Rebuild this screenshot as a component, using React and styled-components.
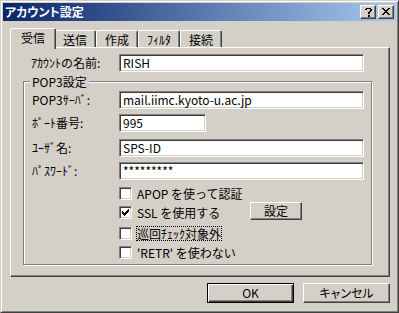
import React from 'react';
import styled, { createGlobalStyle } from 'styled-components';

const FACE = '#D4D0C8';

const GlobalStyle = createGlobalStyle`
  html, body { margin: 0; padding: 0; background: ${FACE}; }
  body {
    font-family: "Noto Sans CJK JP", "Liberation Sans", sans-serif;
    font-size: 12px;
    color: #000;
  }
  *, *::before, *::after { box-sizing: border-box; }
  #root { width: 399px; height: 313px; }
`;

const Window = styled.div`
  width: 399px;
  height: 313px;
  display: flex;
  flex-direction: column;
  padding: 2px;
  background: ${FACE};
  border: 1px solid;
  border-color: ${FACE} #404040 #404040 ${FACE};
  box-shadow: inset 1px 1px 0 #fff, inset -1px -1px 0 #808080;
`;

const TitleBar = styled.div`
  flex: none;
  height: 18px;
  display: flex;
  align-items: center;
  padding: 0 2px 0 2px;
  background: linear-gradient(to right, #0a246a, #a6caf0);
`;

const TitleText = styled.span`
  color: #fff;
  font-weight: bold;
  font-size: 12px;
  line-height: 18px;
  font-feature-settings: "palt";
  white-space: nowrap;
`;

const CaptionButtons = styled.div`
  margin-left: auto;
  display: flex;
  gap: 2px;
`;

const CaptionButton = styled.div`
  width: 16px;
  height: 14px;
  background: ${FACE};
  border: 1px solid;
  border-color: #fff #404040 #404040 #fff;
  box-shadow: inset -1px -1px 0 #808080;
  display: flex;
  justify-content: center;
  align-items: flex-start;
  padding-top: ${(p) => p.$pt}px;
  svg { display: block; shape-rendering: crispEdges; }
`;

const Body = styled.div`
  flex: 1;
  display: flex;
  flex-direction: column;
  padding: 7px 6px 0 7px;
`;

const TabStrip = styled.div`
  flex: none;
  height: 19px;
  display: flex;
  align-items: flex-end;
  padding-left: 2px;
`;

const Tab = styled.div`
  position: relative;
  z-index: ${(p) => (p.$active ? 2 : 1)};
  height: ${(p) => (p.$active ? 21 : 17)}px;
  margin: 0 ${(p) => (p.$active ? -2 : 0)}px ${(p) => (p.$active ? -2 : 0)}px;
  padding: 3px ${(p) => (p.$active ? 10 : 8)}px 0;
  background: ${FACE};
  border-top: 1px solid #fff;
  border-left: 1px solid #fff;
  border-right: 1px solid #404040;
  border-radius: 2px 2px 0 0;
  box-shadow: inset -1px 0 0 #808080;
  line-height: 12px;
  white-space: nowrap;
`;

const Panel = styled.div`
  flex: none;
  height: 230px;
  border: 1px solid;
  border-color: #fff #404040 #404040 #fff;
  box-shadow: inset -1px -1px 0 #808080;
  padding: 6px 0 0 12px;
  display: flex;
  flex-direction: column;
  align-items: flex-start;
`;

const FieldRow = styled.div`
  display: flex;
  align-items: center;
  height: 18px;
  margin-top: ${(p) => p.$mt || 0}px;
  padding-left: ${(p) => p.$indent || 0}px;
`;

const FieldLabel = styled.span`
  flex: none;
  width: ${(p) => p.$w}px;
  line-height: 12px;
  white-space: nowrap;
`;

const TextBox = styled.div`
  flex: none;
  width: ${(p) => p.$w}px;
  height: 18px;
  background: #fff;
  border: 1px solid;
  border-color: #808080 #fff #fff #808080;
  box-shadow: inset 1px 1px 0 #404040, inset -1px -1px 0 ${FACE};
  padding: 0 2px 0 3px;
  line-height: 16px;
  white-space: nowrap;
  overflow: hidden;
`;

const Group = styled.div`
  position: relative;
  width: 349px;
  height: 184px;
  margin-top: 9px;
  border: 1px solid #808080;
  box-shadow: inset 1px 1px 0 #fff, 1px 1px 0 #fff;
  padding: 9px 0 0 8px;
`;

const Legend = styled.span`
  position: absolute;
  top: -7px;
  left: 6px;
  padding: 0 2px;
  background: ${FACE};
  line-height: 13px;
  white-space: nowrap;
`;

const CheckList = styled.div`
  display: flex;
  flex-direction: column;
  margin-left: 87px;
`;

const CheckRow = styled.div`
  display: flex;
  align-items: flex-start;
  height: 13px;
  margin-top: ${(p) => p.$mt}px;
`;

const CheckBox = styled.span`
  flex: none;
  width: 13px;
  height: 13px;
  background: #fff;
  border: 1px solid;
  border-color: #808080 #fff #fff #808080;
  box-shadow: inset 1px 1px 0 #404040, inset -1px -1px 0 ${FACE};
  padding: 2px 0 0 2px;
  svg { display: block; shape-rendering: crispEdges; }
`;

const CheckText = styled.span`
  flex: none;
  width: ${(p) => (p.$w ? `${p.$w}px` : 'auto')};
  height: 15px;
  margin: -1px 0 0 4px;
  line-height: 13px;
  border: 1px dotted ${(p) => (p.$focus ? '#000' : 'transparent')};
  border-left-width: 1px;
  white-space: nowrap;
`;

const PushButton = styled.div`
  flex: none;
  width: ${(p) => p.$w}px;
  height: ${(p) => p.$h}px;
  margin-top: ${(p) => p.$mt || 0}px;
  display: flex;
  align-items: center;
  justify-content: center;
  background: ${FACE};
  border: 1px solid;
  border-color: ${(p) => (p.$default ? '#000' : '#fff #404040 #404040 #fff')};
  box-shadow: ${(p) =>
    p.$default
      ? 'inset 1px 1px 0 #fff, inset -1px -1px 0 #404040, inset -2px -2px 0 #808080'
      : 'inset -1px -1px 0 #808080'};
  line-height: 12px;
  font-feature-settings: "palt";
  white-space: nowrap;
`;

const ButtonRow = styled.div`
  display: flex;
  justify-content: flex-end;
  gap: 9px;
  margin-top: 6px;
`;

const HelpGlyph = () => (
  <svg width="7" height="9" viewBox="0 0 7 9">
    <path
      fill="#000"
      d="M1 0h5v1H1z M0 1h2v1H0z M5 1h2v1H5z M5 2h2v1H5z M4 3h2v1H4z M3 4h2v2H3z M3 7h2v2H3z"
    />
  </svg>
);

const CloseGlyph = () => (
  <svg width="8" height="7" viewBox="0 0 8 7">
    <path
      fill="#000"
      d="M0 0h2v1H0z M6 0h2v1H6z M1 1h2v1H1z M5 1h2v1H5z M2 2h4v1H2z M3 3h2v1H3z M2 4h4v1H2z M1 5h2v1H1z M5 5h2v1H5z M0 6h2v1H0z M6 6h2v1H6z"
    />
  </svg>
);

const CheckGlyph = () => (
  <svg width="7" height="7" viewBox="0 0 7 7">
    <path
      fill="#000"
      d="M0 2h1v3H0z M1 3h1v3H1z M2 4h1v3H2z M3 3h1v3H3z M4 2h1v3H4z M5 1h1v3H5z M6 0h1v3H6z"
    />
  </svg>
);

const tabs = ['受信', '送信', '作成', 'ﾌｨﾙﾀ', '接続'];

const fields = [
  { label: 'POP3ｻｰﾊﾞ:', value: 'mail.iimc.kyoto-u.ac.jp', w: 245, mt: 0 },
  { label: 'ﾎﾟｰﾄ番号:', value: '995', w: 87, mt: 5 },
  { label: 'ﾕｰｻﾞ名:', value: 'SPS-ID', w: 245, mt: 7 },
  { label: 'ﾊﾟｽﾜｰﾄﾞ:', value: '*********', w: 245, mt: 5 },
];

const checks = [
  { text: 'APOP を使って認証', checked: false, mt: 7 },
  { text: 'SSL を使用する', checked: true, mt: 6, button: '設定' },
  { text: '巡回ﾁｪｯｸ対象外', checked: false, mt: 8, focus: true },
  { text: "'RETR' を使わない", checked: false, mt: 6 },
];

export default function App() {
  return (
    <>
      <GlobalStyle />
      <Window>
        <TitleBar>
          <TitleText>アカウント設定</TitleText>
          <CaptionButtons>
            <CaptionButton $pt={2}>
              <HelpGlyph />
            </CaptionButton>
            <CaptionButton $pt={2}>
              <CloseGlyph />
            </CaptionButton>
          </CaptionButtons>
        </TitleBar>
        <Body>
          <TabStrip>
            {tabs.map((t, i) => (
              <Tab key={t} $active={i === 0}>
                {t}
              </Tab>
            ))}
          </TabStrip>
          <Panel>
            <FieldRow $indent={8}>
              <FieldLabel $w={88}>ｱｶｳﾝﾄの名前:</FieldLabel>
              <TextBox $w={245}>RISH</TextBox>
            </FieldRow>
            <Group>
              <Legend>POP3設定</Legend>
              {fields.map((f) => (
                <FieldRow key={f.label} $mt={f.mt}>
                  <FieldLabel $w={87}>{f.label}</FieldLabel>
                  <TextBox $w={f.w}>{f.value}</TextBox>
                </FieldRow>
              ))}
              <CheckList>
                {checks.map((c) => (
                  <CheckRow key={c.text} $mt={c.mt}>
                    <CheckBox>{c.checked && <CheckGlyph />}</CheckBox>
                    <CheckText $focus={c.focus} $w={c.button ? 114 : 0}>
                      {c.text}
                    </CheckText>
                    {c.button && (
                      <PushButton $w={52} $h={18} $mt={-4}>
                        {c.button}
                      </PushButton>
                    )}
                  </CheckRow>
                ))}
              </CheckList>
            </Group>
          </Panel>
          <ButtonRow>
            <PushButton $w={87} $h={20} $default>
              OK
            </PushButton>
            <PushButton $w={87} $h={20}>
              キャンセル
            </PushButton>
          </ButtonRow>
        </Body>
      </Window>
    </>
  );
}
